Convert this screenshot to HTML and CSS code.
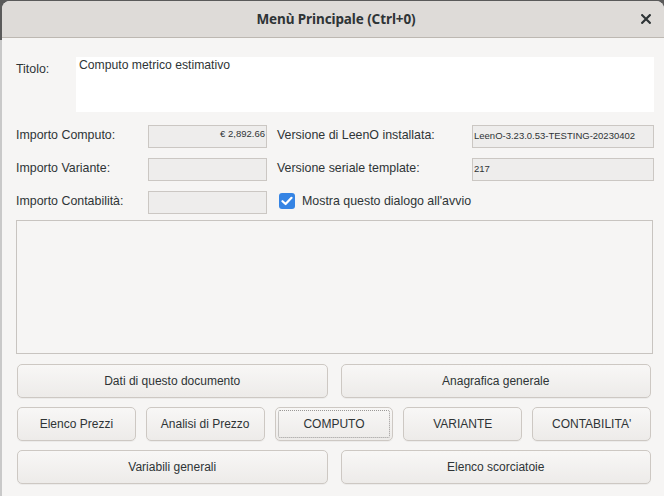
FILE: index.html
```html
<!DOCTYPE html>
<html lang="it">
<head>
<meta charset="utf-8">
<title>Menù Principale</title>
<link rel="stylesheet" href="styles.css">
</head>
<body>
<div class="window">
  <header class="titlebar">
    <span></span>
    <h1 class="title">Menù Principale (Ctrl+0)</h1>
    <button class="close" aria-label="Chiudi">
      <svg width="10" height="10" viewBox="0 0 10 10"><path d="M1.2 1.2 L8.8 8.8 M8.8 1.2 L1.2 8.8" stroke="#2e3436" stroke-width="2.2" stroke-linecap="square"/></svg>
    </button>
  </header>
  <main class="content">
    <div class="title-row">
      <span class="label title-label">Titolo:</span>
      <div class="textarea">Computo metrico estimativo</div>
    </div>
    <div class="info-grid">
      <span class="label">Importo Computo:</span>
      <div class="field right">€ 2,892.66</div>
      <span class="label col3">Versione di LeenO installata:</span>
      <div class="field">LeenO-3.23.0.53-TESTING-20230402</div>

      <span class="label">Importo Variante:</span>
      <div class="field"></div>
      <span class="label col3">Versione seriale template:</span>
      <div class="field">217</div>

      <span class="label">Importo Contabilità:</span>
      <div class="field"></div>
      <label class="check">
        <span class="box">
          <svg width="12" height="10" viewBox="0 0 12 10"><path d="M1.5 5.2 L4.6 8 L10.5 1.8" fill="none" stroke="#fff" stroke-width="2.2" stroke-linecap="round" stroke-linejoin="round"/></svg>
        </span>
        <span class="label">Mostra questo dialogo all'avvio</span>
      </label>
    </div>
    <div class="frame"></div>
    <div class="buttons">
      <div class="row two">
        <button class="btn">Dati di questo documento</button>
        <button class="btn">Anagrafica generale</button>
      </div>
      <div class="row five">
        <button class="btn">Elenco Prezzi</button>
        <button class="btn">Analisi di Prezzo</button>
        <button class="btn focus">COMPUTO</button>
        <button class="btn">VARIANTE</button>
        <button class="btn">CONTABILITA'</button>
      </div>
      <div class="row two">
        <button class="btn">Variabili generali</button>
        <button class="btn">Elenco scorciatoie</button>
      </div>
    </div>
  </main>
</div>
</body>
</html>
```
FILE: styles.css
```css
html, body {
  margin: 0;
  padding: 0;
}
body {
  width: 664px;
  height: 496px;
  overflow: hidden;
  background: linear-gradient(#5a5a5a 0 40px, #c9c9c9 40px);
  font-family: "Liberation Sans", Arial, sans-serif;
  font-size: 12px;
  color: #2e3436;
}
.window {
  margin: 1px 0 0 2px;
  height: 495px;
  background: #f6f5f4;
  border-radius: 8px 8px 0 0;
  overflow: hidden;
  display: flex;
  flex-direction: column;
}
.titlebar {
  height: 36px;
  flex: none;
  background: #dedbd8;
  border-bottom: 1px solid #bdb8b2;
  display: grid;
  grid-template-columns: 1fr auto 1fr;
  align-items: center;
}
.title {
  margin: 0 0 0 6px;
  font-family: "Noto Sans", "DejaVu Sans", sans-serif;
  font-size: 13.5px;
  font-weight: 700;
  color: #2e3436;
  letter-spacing: -0.1px;
}
.close {
  justify-self: end;
  margin-right: 6px;
  width: 24px;
  height: 24px;
  border: 0;
  background: transparent;
  padding: 0;
  display: flex;
  align-items: center;
  justify-content: center;
}
.content {
  padding: 19px 10px 0 14px;
  display: flex;
  flex-direction: column;
}
.label {
  white-space: nowrap;
  font-size: 12.4px;
}
.title-row {
  display: flex;
  align-items: flex-start;
}
.title-label {
  width: 60px;
  margin-top: 5px;
}
.textarea {
  flex: 1;
  height: 55px;
  background: #fff;
  padding: 1px 3px;
  box-sizing: border-box;
  line-height: 14px;
  font-size: 12.2px;
}
.info-grid {
  margin-top: 13px;
  display: grid;
  grid-template-columns: 132px 119px 205px 182px;
  row-gap: 10px;
  grid-auto-rows: 23px;
  align-items: center;
}
.info-grid > .label {
  margin-bottom: 4px;
}
.info-grid > .col3 {
  margin-left: 10px;
}
.field {
  height: 23px;
  box-sizing: border-box;
  border: 1px solid #cbc7c3;
  background: #eeedec;
  font-size: 9.5px;
  line-height: 19px;
  padding: 0 1px;
  white-space: nowrap;
  overflow: hidden;
}
.field.right {
  text-align: right;
  line-height: 15px;
}
.check {
  grid-column: 3 / span 2;
  display: flex;
  align-items: center;
  gap: 7px;
  margin-left: 12px;
  margin-top: -3px;
}
.box {
  width: 16px;
  height: 16px;
  border-radius: 3px;
  background: #3584e4;
  display: flex;
  align-items: center;
  justify-content: center;
}
.frame {
  margin-top: 6px;
  margin-right: 1px;
  height: 134px;
  box-sizing: border-box;
  border: 1px solid #c8c4c0;
}
.buttons {
  margin-top: 10px;
  display: flex;
  flex-direction: column;
  gap: 9px;
  padding-left: 1px;
  padding-right: 3px;
}
.row {
  display: grid;
  height: 34px;
}
.row.two {
  grid-template-columns: 1fr 1fr;
  column-gap: 13px;
}
.row.five {
  grid-template-columns: repeat(5, 1fr);
  column-gap: 10px;
}
.btn {
  font-family: "Liberation Sans", Arial, sans-serif;
  font-size: 12px;
  color: #2e3436;
  border: 1px solid #cdc8c3;
  border-radius: 5px;
  background: linear-gradient(#f8f7f6, #edebe9);
  box-shadow: 0 1px 0 rgba(0,0,0,0.04);
  padding: 0;
}
.btn.focus {
  outline: 1px dotted #9a9896;
  outline-offset: -4px;
}
```
